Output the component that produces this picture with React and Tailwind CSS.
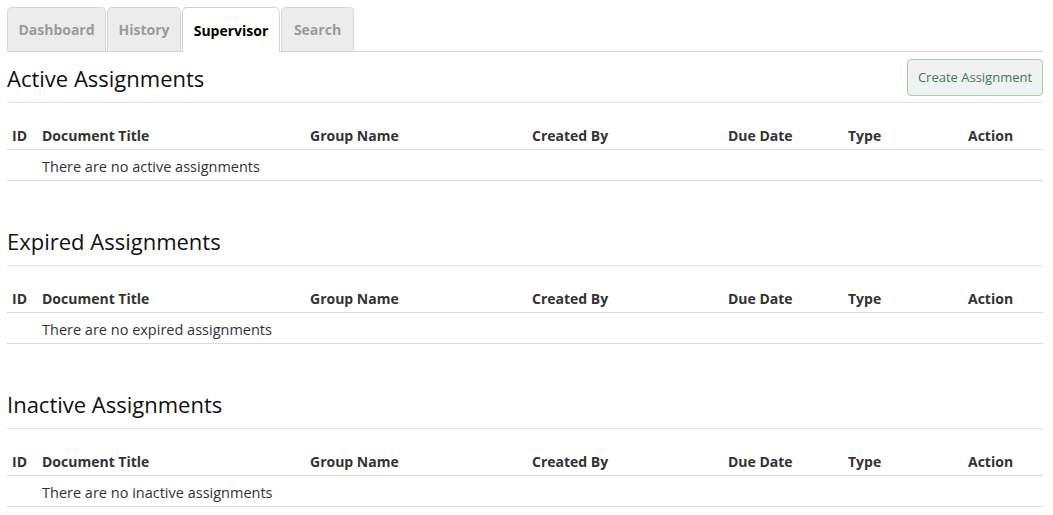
const TABS = [
  { label: "Dashboard", width: "w-[99px]" },
  { label: "History", width: "w-[74px]" },
  { label: "Supervisor", width: "w-[98px]", active: true },
  { label: "Search", width: "w-[73px]" },
];

const SECTIONS = [
  { title: "Active Assignments", empty: "There are no active assignments", create: true },
  { title: "Expired Assignments", empty: "There are no expired assignments" },
  { title: "Inactive Assignments", empty: "There are no inactive assignments" },
];

const COLUMNS = ["ID", "Document Title", "Group Name", "Created By", "Due Date", "Type", "Action"];

const GRID = "grid grid-cols-[30px_268px_222px_196px_120px_120px_1fr]";

function Tabs() {
  return (
    <div className="flex gap-px h-[45px] border-b border-[#d4d4d4]">
      {TABS.map((tab) => (
        <div
          key={tab.label}
          className={`${tab.width} flex items-center justify-center rounded-t-[5px] border border-b-0 text-[14px] font-bold ${
            tab.active
              ? "bg-white border-[#d4d4d4] text-black h-[45px]"
              : "bg-[#ececec] border-[#d8d8d8] text-[#9a9a9a] h-[44px]"
          }`}
        >
          {tab.label}
        </div>
      ))}
    </div>
  );
}

function Section({ section }) {
  return (
    <div>
      <div className="flex items-center justify-between py-[7px] h-[51px] border-b border-[#e3e3e3]">
        <h2 className="pt-[2px] text-[22px] leading-none text-[#111]">{section.title}</h2>
        {section.create && (
          <button className="h-[37px] w-[136px] rounded-[4px] border border-[#95d8a3] bg-[#f1f1f1] pt-px text-[13px] text-[#3d7a5c]">
            Create Assignment
          </button>
        )}
      </div>
      <div className={`${GRID} mt-[17px] h-[30px] items-center pt-[1px] border-b border-[#dcdcdc] text-[14px] font-bold text-[#333]`}>
        {COLUMNS.map((col) => (
          <div key={col} className="pl-[5px]">
            {col}
          </div>
        ))}
      </div>
      <div className={`${GRID} h-[31px] items-center pt-[4px] border-b border-[#dcdcdc] text-[14.5px] text-[#333]`}>
        <div />
        <div className="col-span-6 pl-[5px]">{section.empty}</div>
      </div>
    </div>
  );
}

export default function App() {
  return (
    <div
      className="bg-white min-h-[515px] pt-[7px] pl-[7px]"
      style={{ fontFamily: "'Open Sans', 'Noto Sans', sans-serif" }}
    >
      <div className="w-[1036px]">
        <Tabs />
        <div className="flex flex-col gap-[34px]">
          {SECTIONS.map((s) => (
            <Section key={s.title} section={s} />
          ))}
        </div>
      </div>
    </div>
  );
}
